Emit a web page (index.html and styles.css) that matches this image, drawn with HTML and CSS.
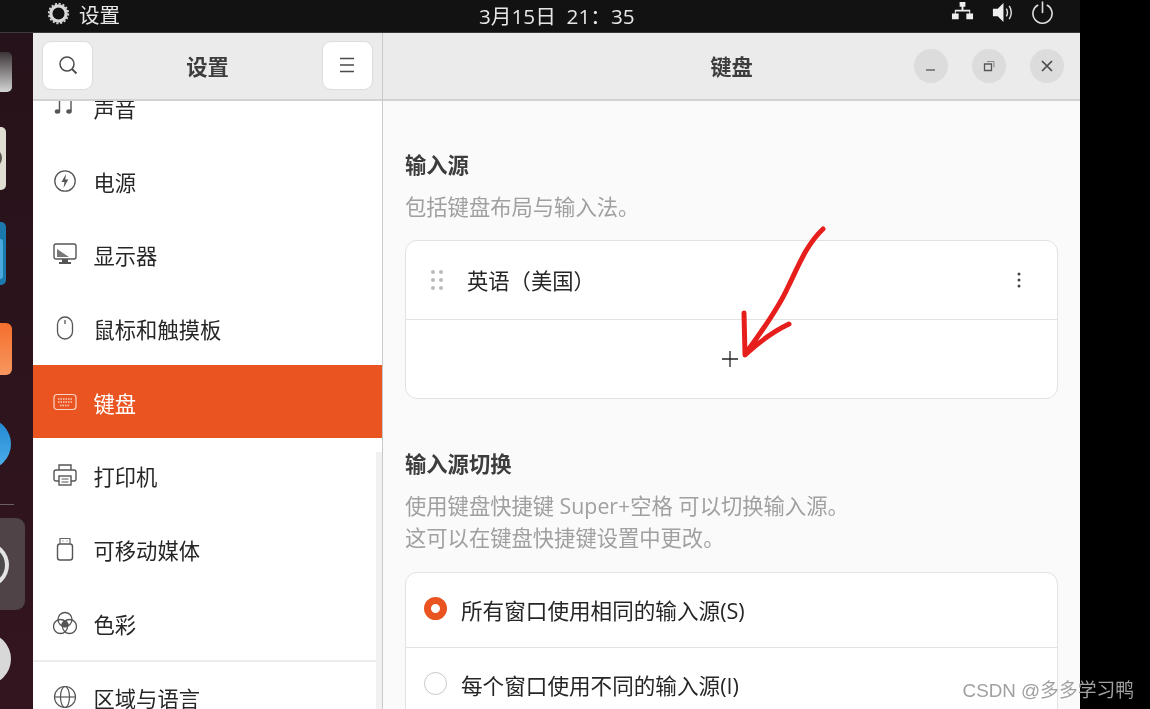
FILE: index.html
```html
<!DOCTYPE html>
<html lang="zh">
<head>
  <meta charset="utf-8">
  <title>设置</title>
  <link rel="stylesheet" href="styles.css">
</head>
<body>
  <div class="screen">
    <div class="topbar">
      <div class="app-menu">
        <svg class="gear" viewBox="0 0 24 24"><circle cx="12" cy="12" r="8" fill="none" stroke="#d8d8d8" stroke-width="3.4"/><circle cx="12" cy="12" r="10.2" fill="none" stroke="#d8d8d8" stroke-width="1.8" stroke-dasharray="2.2 1.8"/></svg>
        <span>设置</span>
      </div>
      <div class="clock">3月15日&nbsp; 21：35</div>
      <div class="tray">
        <svg viewBox="0 0 24 24"><path fill="#eee" d="M9 1h6v5h-2v3h7v4h3v6h-7v-6h3v-2h-14v2h3v6h-7v-6h3v-4h7v-3h-2z"/></svg>
        <svg viewBox="0 0 24 24"><path fill="#eee" d="M2 8h5l6-6v20l-6-6h-5z"/><path fill="none" stroke="#ddd" stroke-width="1.5" d="M16 8c1.5 2.5 1.5 5.500 0 8M19 5c2.800 4.500 2.800 9.500 0 14"/></svg>
        <svg viewBox="0 0 24 24"><path fill="none" stroke="#ddd" stroke-width="1.700" stroke-linecap="round" d="M7 4.500a10 10 0 1 0 10 0M12 1v11"/></svg>
      </div>
    </div>

    <div class="desk">
      <svg class="dock" viewBox="0 0 33 676" preserveAspectRatio="none">
        <defs>
          <linearGradient id="g1" x1="0" y1="0" x2="0" y2="1"><stop offset="0" stop-color="#3b3437"/><stop offset="1" stop-color="#d4d4d4"/></linearGradient>
          <linearGradient id="g2" x1="0" y1="0" x2="0" y2="1"><stop offset="0" stop-color="#f46f2d"/><stop offset="1" stop-color="#f7975f"/></linearGradient>
          <linearGradient id="g3" x1="0" y1="0" x2="0" y2="1"><stop offset="0" stop-color="#1f86d2"/><stop offset="1" stop-color="#4fb0ea"/></linearGradient>
        </defs>
        <rect x="-20" y="19" width="32" height="40" rx="5" fill="url(#g1)"/>
        <rect x="-30" y="94" width="36" height="63" rx="5" fill="#e0ddd2"/>
        <circle cx="-8" cy="125" r="10" fill="#5a5650"/>
        <rect x="-30" y="189" width="36" height="63" rx="5" fill="#1b78ad"/>
        <rect x="-30" y="206" width="33" height="40" rx="3" fill="#4aa8dc"/>
        <rect x="-30" y="290" width="42" height="52" rx="6" fill="url(#g2)"/>
        <circle cx="-15" cy="411" r="26" fill="url(#g3)"/>
        <rect x="0" y="471" width="14" height="1" fill="#6b6066"/>
        <rect x="-20" y="485" width="45" height="92" rx="9" fill="#4f4347"/>
        <circle cx="-14" cy="532" r="23" fill="#e4e4e4"/>
        <circle cx="-14" cy="532" r="19" fill="#4c4a4a"/>
        <circle cx="-15" cy="626" r="26" fill="#d8d8d8"/>
      </svg>

      <div class="window">
        <aside class="sidebar">
          <header class="side-head">
            <button class="head-btn">
              <svg viewBox="0 0 24 24"><circle cx="11" cy="11" r="7" fill="none" stroke="#4a4a4a" stroke-width="1.500"/><path stroke="#4a4a4a" stroke-width="1.800" d="M16 16l4.500 4.500"/></svg>
            </button>
            <h1>设置</h1>
            <button class="head-btn">
              <svg viewBox="0 0 24 24"><path stroke="#4a4a4a" stroke-width="1.500" d="M5 5.500h14M5 12h14M5 18.500h14"/></svg>
            </button>
          </header>
          <div class="scroller">
            <ul class="side-list">
              <li class="side-item">
                <svg viewBox="0 0 24 24"><path fill="none" stroke="#555" stroke-width="1.400" d="M6.500 -8v24M18 -8v24"/><ellipse cx="4.500" cy="16.500" rx="2.700" ry="2.200" fill="#555"/><ellipse cx="16" cy="16.500" rx="2.700" ry="2.200" fill="#555"/></svg>
                <span>声音</span>
              </li>
              <li class="side-item">
                <svg viewBox="0 0 24 24"><circle cx="12" cy="12" r="10.200" fill="none" stroke="#555" stroke-width="1.300"/><path fill="#555" d="M13 5l-4.500 8h3l-1 6 4.800-8.500h-3z"/></svg>
                <span>电源</span>
              </li>
              <li class="side-item">
                <svg viewBox="0 0 24 24"><rect x="1" y="2" width="22" height="15" rx="2" fill="none" stroke="#555" stroke-width="1.400"/><path fill="#777" d="M4 7l12 8h-12z"/><path fill="#555" d="M9 17h6v3h3v2h-12v-2h3z"/></svg>
                <span>显示器</span>
              </li>
              <li class="side-item">
                <svg viewBox="0 0 24 24"><rect x="4.500" y="1" width="15" height="22" rx="7.500" fill="none" stroke="#555" stroke-width="1.300"/><path stroke="#555" stroke-width="1.300" d="M12 4v4"/></svg>
                <span>鼠标和触摸板</span>
              </li>
              <li class="side-item active">
                <svg viewBox="0 0 24 24"><rect x="1" y="4.500" width="22" height="15" rx="3" fill="none" stroke="#fff" stroke-width="1.200" opacity=".75"/><path stroke="#fff" stroke-width="1.300" stroke-dasharray="1.500 1" opacity=".7" d="M5 9h14M5 12h14M7 15.500h10"/></svg>
                <span>键盘</span>
              </li>
              <li class="side-item">
                <svg viewBox="0 0 24 24"><path fill="none" stroke="#555" stroke-width="1.400" d="M6 7v-5h12v5M6 18h-3a2 2 0 0 1-2-2v-7a2 2 0 0 1 2-2h18a2 2 0 0 1 2 2v7a2 2 0 0 1-2 2h-3"/><rect x="6" y="13" width="12" height="9" fill="none" stroke="#555" stroke-width="1.400"/><path stroke="#555" d="M8.500 16h7M8.500 19h7"/></svg>
                <span>打印机</span>
              </li>
              <li class="side-item">
                <svg viewBox="0 0 24 24"><rect x="4.500" y="7" width="15" height="16" rx="2.500" fill="none" stroke="#555" stroke-width="1.400"/><path fill="none" stroke="#666" stroke-width="1.200" d="M7 7v-5.500h10v5.500M9.500 4h1M13.500 4h1"/></svg>
                <span>可移动媒体</span>
              </li>
              <li class="side-item">
                <svg viewBox="0 0 24 24"><circle cx="12" cy="8.500" r="7" fill="none" stroke="#555" stroke-width="1.300"/><circle cx="7.500" cy="15.500" r="7" fill="none" stroke="#555" stroke-width="1.300"/><circle cx="16.500" cy="15.500" r="7" fill="none" stroke="#555" stroke-width="1.300"/><path fill="#555" d="M12 9a7 7 0 0 1 4 6 7 7 0 0 1-8 0 7 7 0 0 1 4-6z"/></svg>
                <span>色彩</span>
              </li>
              <li class="side-item first-group">
                <svg viewBox="0 0 24 24"><g fill="none" stroke="#555" stroke-width="1.200"><circle cx="12" cy="12" r="10.500"/><ellipse cx="12" cy="12" rx="4.500" ry="10.500"/><path d="M1.500 12h21"/></g></svg>
                <span>区域与语言</span>
              </li>
            </ul>
            <div class="side-scrollbar"></div>
          </div>
        </aside>

        <main class="content">
          <header class="content-head">
            <h1>键盘</h1>
            <div class="win-btns">
              <button class="win-btn"><svg viewBox="0 0 16 16"><path stroke="#555" stroke-width="1.300" d="M3 12h9"/></svg></button>
              <button class="win-btn"><svg viewBox="0 0 16 16"><path fill="none" stroke="#555" stroke-width="1.300" d="M3.500 6h7v6.500h-7z"/><path fill="none" stroke="#888" d="M6 3.500h7v6"/></svg></button>
              <button class="win-btn"><svg viewBox="0 0 16 16"><path stroke="#4a4a4a" stroke-width="1.700" d="M3 3l10 10M13 3l-10 10"/></svg></button>
            </div>
          </header>

          <div class="panel">
            <h2>输入源</h2>
            <p class="hint">包括键盘布局与输入法。</p>
            <div class="card">
              <div class="row source-row">
                <svg class="drag" viewBox="0 0 14 22"><g fill="#bbb"><circle cx="3" cy="3" r="2"/><circle cx="11" cy="3" r="2"/><circle cx="3" cy="11" r="2"/><circle cx="11" cy="11" r="2"/><circle cx="3" cy="19" r="2"/><circle cx="11" cy="19" r="2"/></g></svg>
                <span>英语（美国）</span>
                <svg class="kebab" viewBox="0 0 4 16"><g fill="#444"><circle cx="2" cy="2" r="1.500"/><circle cx="2" cy="8" r="1.500"/><circle cx="2" cy="14" r="1.500"/></g></svg>
              </div>
              <div class="row add-row">
                <svg class="plus" viewBox="0 0 16 16"><path stroke="#222" stroke-width="1.300" d="M8 0v16M0 8h16"/></svg>
              </div>
            </div>

            <h2 class="second">输入源切换</h2>
            <p class="hint">使用键盘快捷键 Super+空格 可以切换输入源。<br>这可以在键盘快捷键设置中更改。</p>
            <div class="card second-card">
              <div class="row radio-row"><i class="radio checked"></i><span>所有窗口使用相同的输入源(S)</span></div>
              <div class="row radio-row"><i class="radio"></i><span>每个窗口使用不同的输入源(I)</span></div>
            </div>
          </div>
        </main>
      </div>
    </div>
  </div>

  <!-- hand drawn arrow on top of the screenshot -->
  <svg class="arrow" viewBox="0 0 100 140">
    <path fill="none" stroke="#e61f1c" stroke-width="5" stroke-linecap="round" stroke-linejoin="round" d="M85 4C68 20 60 42 50 62 42 80 30 98 8 128M6 88L7 130C20 118 36 106 51 99"/>
  </svg>
  <div class="watermark">CSDN @多多学习鸭</div>
</body>
</html>
```

FILE: styles.css
```css
* {
  box-sizing: border-box;
}

html, body {
  margin: 0;
  padding: 0;
  height: 100%;
  overflow: hidden;
  background: #000;
}

body {
  font-family: "Open Sans", "Noto Sans CJK SC", sans-serif;
  font-size: 21.300px;
  color: #262626;
  position: relative;
}

h1, h2, p, ul {
  margin: 0;
  padding: 0;
}

button {
  appearance: none;
  border: none;
  padding: 0;
  display: flex;
  align-items: center;
  justify-content: center;
}

/* the reference is a scaled up photo of the screen, so everything is a bit soft */
.screen, .arrow, .watermark {
  filter: blur(0.4px);
}

.screen {
  width: 1080px;
  height: 709px;
  display: flex;
  flex-direction: column;
  overflow: hidden;
}

.topbar {
  height: 33px;
  flex: none;
  background: #121212;
  border-bottom: 1px solid #3a3a3a;
  color: #e6e6e6;
  display: flex;
  align-items: center;
  padding-left: 47px;
}

.app-menu {
  width: 432px;
  display: flex;
  align-items: center;
  gap: 9px;
  font-size: 20.500px;
}

.app-menu span {
  margin-top: -4px;
}

.gear {
  width: 23px;
  height: 23px;
  margin-top: -6px;
}

.clock {
  font-size: 20.700px;
  margin-top: -2px;
  white-space: nowrap;
}

.tray {
  margin-left: auto;
  padding-right: 26px;
  display: flex;
  gap: 17px;
  margin-top: -7px;
}

.tray svg {
  width: 23px;
  height: 23px;
}

.desk {
  flex: 1;
  display: flex;
  min-height: 0;
}

.dock {
  width: 33px;
  height: 100%;
  flex: none;
  background: linear-gradient(#26121a, #33151f);
}

.window {
  flex: 1;
  display: flex;
  min-width: 0;
}

.sidebar {
  width: 350px;
  flex: none;
  display: flex;
  flex-direction: column;
  background: #fff;
  border-right: 1px solid #c9c9c9;
}

.side-head {
  height: 68px;
  flex: none;
  background: #ebebeb;
  border-bottom: 2px solid #d2d2d2;
  display: flex;
  align-items: center;
  justify-content: space-between;
  padding: 0 9px 2px;
}

.side-head h1, .content-head h1 {
  font-size: 21.300px;
  font-weight: 700;
  color: #3d3d3d;
}

.head-btn {
  width: 51px;
  height: 49px;
  background: #fff;
  border: 1.500px solid #dcdcdc;
  border-radius: 9px;
}

.head-btn svg {
  width: 24px;
  height: 24px;
}

.scroller {
  flex: 1;
  overflow: hidden;
  position: relative;
}

.side-list {
  list-style: none;
  margin-top: -31px;
}

.side-item {
  height: 73.700px;
  display: flex;
  align-items: center;
  gap: 15.500px;
  padding-left: 19px;
}

.side-item span {
  margin-top: 1px;
}

.side-item svg {
  width: 24px;
  height: 24px;
  margin: 0 1px;
  flex: none;
  overflow: hidden;
}

.side-item.active {
  background: #e95420;
  color: #fff;
}

.first-group {
  border-top: 2px solid #ececec;
}

.side-scrollbar {
  position: absolute;
  right: 0;
  top: 351px;
  bottom: 0;
  width: 6px;
  background: #f1f1f1;
}

.content {
  flex: 1;
  min-width: 0;
  display: flex;
  flex-direction: column;
  background: #fafafa;
}

.content-head {
  height: 68px;
  flex: none;
  background: #ebebeb;
  border-bottom: 2px solid #d2d2d2;
  display: flex;
  align-items: center;
  justify-content: center;
  position: relative;
  padding-bottom: 2px;
}

.win-btns {
  position: absolute;
  right: 16px;
  top: 16px;
  display: flex;
  gap: 24px;
}

.win-btn {
  width: 34px;
  height: 34px;
  border-radius: 50%;
  background: #dcdcdc;
}

.win-btn svg {
  width: 16px;
  height: 16px;
}

.panel {
  padding: 49px 22px 0;
}

.panel h2 {
  font-size: 21.300px;
  font-weight: 700;
  line-height: 30px;
  color: #3d3d3d;
}

.panel h2.second {
  margin-top: 50px;
}

.hint {
  margin-top: 11px;
  line-height: 32.500px;
  color: #a0a0a0;
}

.card {
  margin-top: 16px;
  background: #fff;
  border: 1.500px solid #e2e2e2;
  border-radius: 12px;
  overflow: hidden;
}

.second-card {
  margin-top: 17px;
}

.row {
  display: flex;
  align-items: center;
}

.source-row {
  height: 79px;
  padding: 0 36px 0 24px;
  gap: 23px;
  border-bottom: 1.500px solid #e2e2e2;
}

.drag {
  width: 14px;
  height: 22px;
}

.kebab {
  width: 4px;
  height: 16px;
  margin-left: auto;
}

.add-row {
  height: 78px;
  justify-content: center;
}

.plus {
  width: 16px;
  height: 16px;
  margin: 1px 3px 0 0;
}

.radio-row {
  height: 75px;
  padding-left: 18px;
  gap: 14px;
  border-bottom: 1.500px solid #e2e2e2;
}

.radio-row span {
  font-size: 21.600px;
}

.radio {
  width: 23px;
  height: 23px;
  border-radius: 50%;
  border: 1.500px solid #c8c8c8;
  margin-top: -3px;
  flex: none;
}

.radio.checked {
  border: 7px solid #e95420;
  background: #fff;
}

.arrow {
  position: absolute;
  left: 738px;
  top: 225px;
  width: 100px;
  height: 140px;
}

.watermark {
  position: absolute;
  right: 16px;
  top: 675px;
  font-family: "Liberation Sans", "Noto Sans CJK SC", sans-serif;
  font-size: 18.800px;
  color: #a0a0a0;
  white-space: nowrap;
}
```
